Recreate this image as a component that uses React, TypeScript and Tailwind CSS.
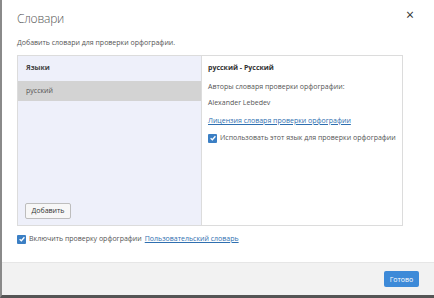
import React from 'react'

const font = { fontFamily: '"Open Sans", "Noto Sans", sans-serif' }

function Check() {
  return (
    <span className="inline-flex h-[9px] w-[9px] shrink-0 items-center justify-center rounded-[1px] bg-[#3b7fc4]">
      <svg viewBox="0 0 10 10" className="h-[8px] w-[8px]">
        <path d="M2 5.2 L4.2 7.2 L8 2.8" fill="none" stroke="#fff" strokeWidth="1.6" />
      </svg>
    </span>
  )
}

export default function App() {
  return (
    <div
      className="flex h-[298px] w-[434px] flex-col overflow-hidden border-b-[3px] border-l-2 border-b-[#555] border-l-[#8a8a8a] bg-white text-[#444]"
      style={font}
    >
      <div className="flex flex-1 flex-col px-[15px]">
        <div className="flex items-start justify-between pt-[10px]">
          <h1 className="text-[12px] font-light leading-[18px] tracking-[-0.2px] text-[#555]">Словари</h1>
          <span className="mr-[5px] mt-[-2px] text-[14px] leading-none text-[#333]">×</span>
        </div>
        <p className="mt-[10px] text-[7px] leading-[10px] text-[#555]">
          Добавить словари для проверки орфографии.
        </p>

        <div className="mt-[7px] flex h-[171px] w-[386px] border border-[#dcdcdc]">
          <div className="flex w-[183px] flex-col bg-[#eef0fa]">
            <div className="flex h-[25px] items-center px-[8px] text-[7px] font-bold text-[#444]">
              Языки
            </div>
            <div className="flex h-[20px] items-center bg-[#d3d3d3] px-[8px] text-[7px] text-[#555]">
              русский
            </div>
            <div className="flex-1" />
            <div className="px-[7px] pb-[6px]">
              <button className="h-[16px] w-[46px] rounded-[2px] border border-[#bdbdbd] bg-[#f7f7f7] text-[7px] leading-none text-[#333]">
                Добавить
              </button>
            </div>
          </div>
          <div className="flex flex-1 flex-col border-l border-[#dcdcdc] bg-white px-[6px] pt-[7px] text-[7px] text-[#555]">
            <div className="font-bold leading-[10px] text-[#333]">русский - Русский</div>
            <div className="mt-[9px] leading-[10px]">Авторы словаря проверки орфографии:</div>
            <div className="mt-[6px] leading-[10px]">Alexander Lebedev</div>
            <div className="mt-[8px] leading-[10px] text-[#2f6fb0] underline">
              Лицензия словаря проверки орфографии
            </div>
            <div className="mt-[7px] flex items-center gap-[3px] leading-[10px]">
              <Check />
              <span>Использовать этот язык для проверки орфографии</span>
            </div>
          </div>
        </div>

        <div className="mt-[8px] flex items-center gap-[3px] text-[7px] leading-[10px] text-[#555]">
          <Check />
          <span>Включить проверку орфографии</span>
          <span className="text-[#2f6fb0] underline">Пользовательский словарь</span>
        </div>
      </div>

      <div className="flex h-[33px] items-center justify-end border-t border-[#e6e6e6] bg-[#f2f2f2] pr-[15px]">
        <button className="h-[16px] w-[35px] rounded-[2px] bg-[#3d8ad8] text-[7px] leading-none text-white">
          Готово
        </button>
      </div>
    </div>
  )
}
